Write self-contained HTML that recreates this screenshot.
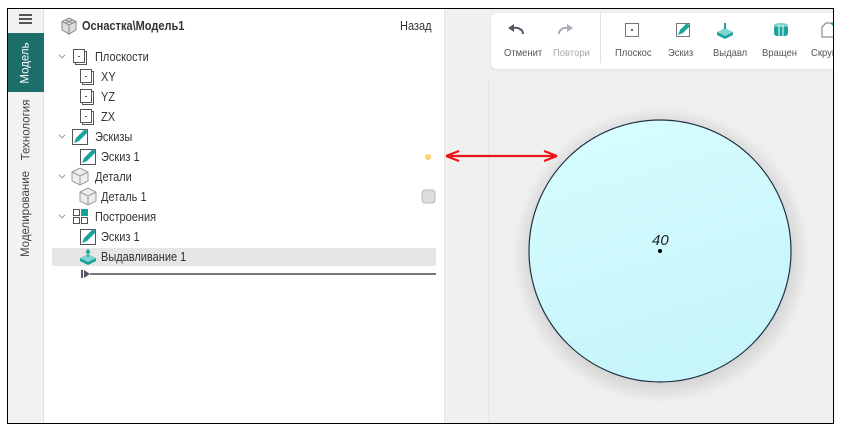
<!DOCTYPE html>
<html><head><meta charset="utf-8"><style>
*{margin:0;padding:0;box-sizing:border-box}
body{width:843px;height:430px;background:#fff;position:relative;overflow:hidden;font-family:"Liberation Sans",sans-serif;color:#333}
.frame{position:absolute;left:7px;top:8px;width:827px;height:416px;border:1px solid #000;overflow:hidden;background:#fff}
.side{position:absolute;left:0;top:0;width:36px;height:100%;background:#f2f2f2;border-right:1px solid #e2e2e2}
.tab{position:absolute;left:0;width:36px;display:flex;align-items:center;justify-content:center}
.tab span{transform:rotate(-90deg);white-space:nowrap;font-size:11.5px;color:#444}
.tree{position:absolute;left:36px;top:0;width:400px;height:100%;background:#fff}
.row{position:absolute;height:20px;font-size:12.5px;line-height:20px;white-space:nowrap;transform:scaleX(.88);transform-origin:left center}
.right{position:absolute;left:436px;top:0;right:0;height:100%;background:#f0f0f0;border-left:1px solid #e4e4e4}
.tb{position:absolute;left:46px;top:4px;width:400px;height:56px;background:#fff;border-radius:6px;box-shadow:0 1px 3px rgba(0,0,0,.08)}
.tbi{position:absolute;top:34px;font-size:10.5px;color:#555;transform:scaleX(.9);transform-origin:left}
</style></head><body>
<div class="frame">
 <div class="side">
  <div style="position:absolute;left:11px;top:5px;width:13px;height:2px;background:#555;box-shadow:0 4px 0 #555,0 8px 0 #555"></div>
  <div class="tab" style="top:24px;height:59px;background:#1b6e6a"><span style="color:#fff">Модель</span></div>
  <div class="tab" style="top:86px;height:70px"><span>Технология</span></div>
  <div class="tab" style="top:160px;height:90px"><span>Моделирование</span></div>
 </div>
 <div class="tree">
  <svg style="position:absolute;left:16px;top:8px" width="18" height="18" viewBox="0 0 18 18"><path d="M9 1L16 4.5V13L9 17L2 13V4.5Z" fill="#ddd" stroke="#888"/><path d="M2 4.5L9 8L16 4.5M9 8V17M5.5 2.8L12.5 6.3M12.5 2.8L5.5 6.3" stroke="#888" fill="none"/></svg>
  <div class="row" style="left:38px;top:7px;font-weight:bold;font-size:12.5px">Оснастка\Модель1</div>
  <div class="row" style="left:356px;top:7px">Назад</div>

  <svg style="position:absolute;left:0;top:0" width="400" height="280">
   <g stroke="#999" fill="none" stroke-width="1">
    <path d="M15 46l3 3 3-3M15 126l3 3 3-3M15 166l3 3 3-3M15 206l3 3 3-3"/>
   </g>
   <g transform="translate(-8,0)">
   <g stroke="#555" fill="#fff" stroke-width="1">
    <rect x="37.5" y="40.5" width="11" height="13"/><path d="M48.5 42.5h2v13h-11v-2" fill="none"/>
   </g>
   <rect x="42" y="47" width="2" height="1" fill="#555"/>
   <g><rect x="36.5" y="120.5" width="15" height="15" fill="#fff" stroke="#555"/><path d="M38 134l2-5 9-9 3 3-9 9z" fill="#1aa39a"/></g>
   <g stroke="#999" fill="#eee"><path d="M36 163l8-4 8 4v9l-8 4-8-4z"/><path d="M36 163l8 4 8-4M44 167v9" fill="none"/></g>
   <g stroke="#555" fill="#fff"><rect x="37.5" y="200.5" width="6" height="6"/><rect x="37.5" y="208.5" width="6" height="6"/><rect x="45.5" y="208.5" width="6" height="6"/><rect x="45" y="200" width="7" height="7" fill="#1aa39a" stroke="none"/></g>
   </g>
   <g transform="translate(-7,0)">
   <g stroke="#555" fill="#fff" stroke-width="1">
    <rect x="43.5" y="60.5" width="11" height="13"/><path d="M54.5 62.5h2v13h-11v-2" fill="none"/>
    <rect x="43.5" y="80.5" width="11" height="13"/><path d="M54.5 82.5h2v13h-11v-2" fill="none"/>
    <rect x="43.5" y="100.5" width="11" height="13"/><path d="M54.5 102.5h2v13h-11v-2" fill="none"/>
   </g>
   <g fill="#555"><rect x="48" y="67" width="2" height="1"/><rect x="48" y="87" width="2" height="1"/><rect x="48" y="107" width="2" height="1"/></g>
   <g><rect x="43.5" y="140.5" width="15" height="15" fill="#fff" stroke="#555"/><path d="M45 154l2-5 9-9 3 3-9 9z" fill="#1aa39a"/></g>
   <g stroke="#999" fill="#eee"><path d="M43 183l8-4 8 4v9l-8 4-8-4z"/><path d="M43 183l8 4 8-4M51 187v9" fill="none"/></g>
   <rect x="8" y="0" width="0" height="0"/>
   </g>
   <rect x="8" y="239" width="384" height="18" rx="2" fill="#e6e6e6"/>
   <g transform="translate(-7,0)">
   <g><rect x="43.5" y="220.5" width="15" height="15" fill="#fff" stroke="#555"/><path d="M45 234l2-5 9-9 3 3-9 9z" fill="#1aa39a"/></g>
   <g><path d="M43 249l8-4 8 4-8 4z" fill="#7fd4cd"/><path d="M43 249v3l8 4v-3zM51 253v3l8-4v-3z" fill="#1aa39a"/><path d="M51 248v-6M49 244l2-3 2 3" stroke="#1aa39a" fill="none" stroke-width="1.5"/></g>
   </g>
   <rect x="37" y="261" width="2" height="8" fill="#556"/><path d="M40 261l6 4-6 4z" fill="#556"/><rect x="46" y="264" width="346" height="2" fill="#777"/>
   <circle cx="384" cy="148" r="3" fill="#ffcf70"/>
   <rect x="378" y="181" width="13" height="13" rx="3" fill="#ddd" stroke="#bbb"/>
  </svg>
  <div class="row" style="left:51px;top:38px">Плоскости</div>
  <div class="row" style="left:57px;top:58px">XY</div>
  <div class="row" style="left:57px;top:78px">YZ</div>
  <div class="row" style="left:57px;top:98px">ZX</div>
  <div class="row" style="left:51px;top:118px">Эскизы</div>
  <div class="row" style="left:57px;top:138px">Эскиз 1</div>
  <div class="row" style="left:51px;top:158px">Детали</div>
  <div class="row" style="left:57px;top:178px">Деталь 1</div>
  <div class="row" style="left:51px;top:198px">Построения</div>
  <div class="row" style="left:57px;top:218px">Эскиз 1</div>
  <div class="row" style="left:57px;top:238px">Выдавливание 1</div>
 </div>
 <div class="right">
  <div style="position:absolute;left:43px;top:70px;right:0;bottom:0;background:#efefef;border-left:1px solid #e6e6e6"></div>
  <div class="tb">
   <svg style="position:absolute;left:0;top:0" width="400" height="56">
    <path d="M22 15c6-1 10 2 10 6" stroke="#556" stroke-width="2" fill="none"/><path d="M17 15l6-4v8z" fill="#556"/>
    <path d="M68 21c0-4 4-7 9-6" stroke="#aab" stroke-width="2" fill="none"/><path d="M82 15l-6-4v8z" fill="#aab"/>
    <rect x="109" y="0" width="1" height="50" fill="#e0e0e0"/>
    <rect x="134.5" y="10.5" width="13" height="13" fill="#fff" stroke="#777"/><circle cx="141" cy="17" r="1" fill="#333"/>
    <rect x="185.5" y="10.5" width="13" height="13" fill="#fff" stroke="#777"/><path d="M187 22l2-5 7-7 3 3-7 7z" fill="#1aa39a"/>
    <path d="M226 19l8-4 8 4-8 4z" fill="#7fd4cd"/><path d="M226 19v3l8 4v-3zM234 23v3l8-4v-3z" fill="#1aa39a"/><path d="M234 16v-6" stroke="#1aa39a" stroke-width="2"/>
    <rect x="283" y="12" width="14" height="11" rx="3" fill="#1aa39a"/><ellipse cx="290" cy="12" rx="7" ry="2" fill="#7fd4cd"/><path d="M288 12v11M292 12v11" stroke="#fff"/>
    <path d="M331 24v-10l4-4h10v14z" fill="#fff" stroke="#777"/><path d="M339 10h6v6z" fill="#1aa39a"/>
   </svg>
   <div class="tbi" style="left:13px">Отменит</div>
   <div class="tbi" style="left:62px;color:#aaa">Повтори</div>
   <div class="tbi" style="left:124px">Плоскос</div>
   <div class="tbi" style="left:177px">Эскиз</div>
   <div class="tbi" style="left:222px">Выдавл</div>
   <div class="tbi" style="left:271px">Вращен</div>
   <div class="tbi" style="left:320px">Скруг</div>
  </div>
 </div>
 <svg style="position:absolute;left:0;top:0" width="827" height="416">
  <defs><radialGradient id="sh" cx=".5" cy=".5" r=".5"><stop offset=".85" stop-color="rgba(0,0,0,.12)"/><stop offset="1" stop-color="rgba(0,0,0,0)"/></radialGradient>
  <linearGradient id="cg" x1="0" y1="0" x2="0.3" y2="1"><stop offset="0" stop-color="#d8fdfe"/><stop offset="1" stop-color="#c6f5fb"/></linearGradient></defs>
  <circle cx="653" cy="246" r="148" fill="url(#sh)"/>
  <circle cx="652" cy="242" r="131" fill="url(#cg)" stroke="#234" stroke-width="1.2"/>
  <circle cx="652" cy="242" r="2" fill="#000"/>
  <text x="644" y="236" font-family="Liberation Sans" font-style="italic" font-size="15" fill="#222">40</text>
  <path d="M438 147H549M438 147l13-5M438 147l13 5M549 147l-13-5M549 147l-13 5" stroke="#e8161c" stroke-width="2.2" fill="none"/>
 </svg>
</div>
</body></html>
